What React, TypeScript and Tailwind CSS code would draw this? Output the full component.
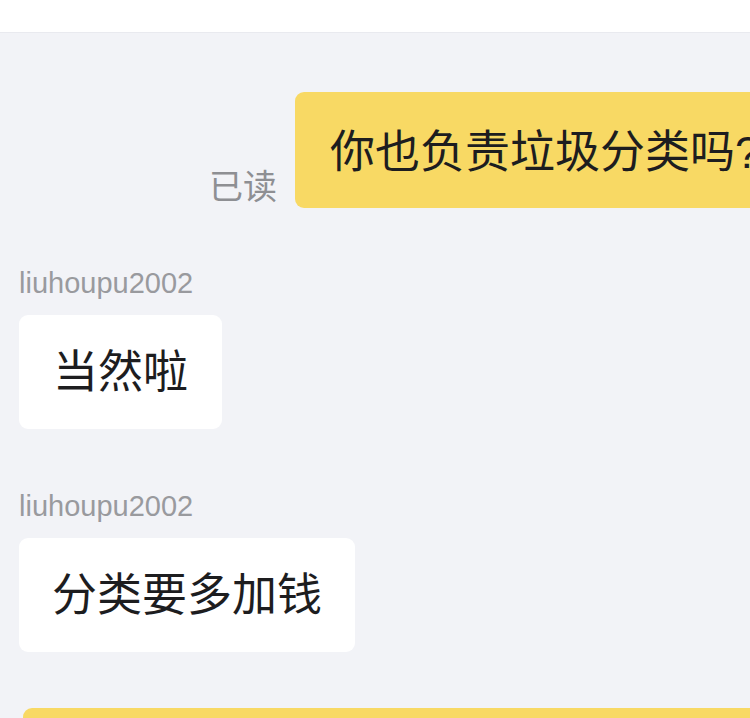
const font = "font-['Liberation_Sans','Noto_Sans_CJK_SC',sans-serif]";

const Name = ({ children }: { children: string }) => (
  <div className="text-[29px] leading-[36px] text-[#999a9e]">{children}</div>
);

const App = () => {
  return (
    <div className={`${font} w-[750px] h-[718px] overflow-hidden bg-[#f2f3f7]`}>
      <header className="h-[33px] bg-white border-b border-[#e9eaef]" />
      <div className="w-[814px] px-[19px] pt-[59px] flex flex-col">
        {/* own message */}
        <div className="flex items-end justify-end gap-[18px]">
          <span className="text-[34px] leading-[40px] text-[#8e8f93] mb-[1px]">已读</span>
          <div className="bg-[#f8d964] rounded-[9px] px-[35px] pt-[28px] pb-[23px] text-[45px] leading-[65px] text-[#1d1d1f] whitespace-nowrap">
            你也负责垃圾分类吗?
          </div>
        </div>

        <div className="mt-[57px] flex flex-col gap-[14px] items-start">
          <Name>liuhoupu2002</Name>
          <div className="bg-white rounded-[9px] px-[34px] pt-[25px] pb-[24px] text-[45px] leading-[65px] text-[#1d1d1f]">
            当然啦
          </div>
        </div>

        <div className="mt-[59px] flex flex-col gap-[14px] items-start">
          <Name>liuhoupu2002</Name>
          <div className="bg-white rounded-[9px] px-[33px] pt-[25px] pb-[24px] text-[45px] leading-[65px] text-[#1d1d1f]">
            分类要多加钱
          </div>
        </div>

        <div className="mt-[56px] ml-[4px] h-[115px] bg-[#f8d964] rounded-[9px]" />
      </div>
    </div>
  );
};

export default App;
